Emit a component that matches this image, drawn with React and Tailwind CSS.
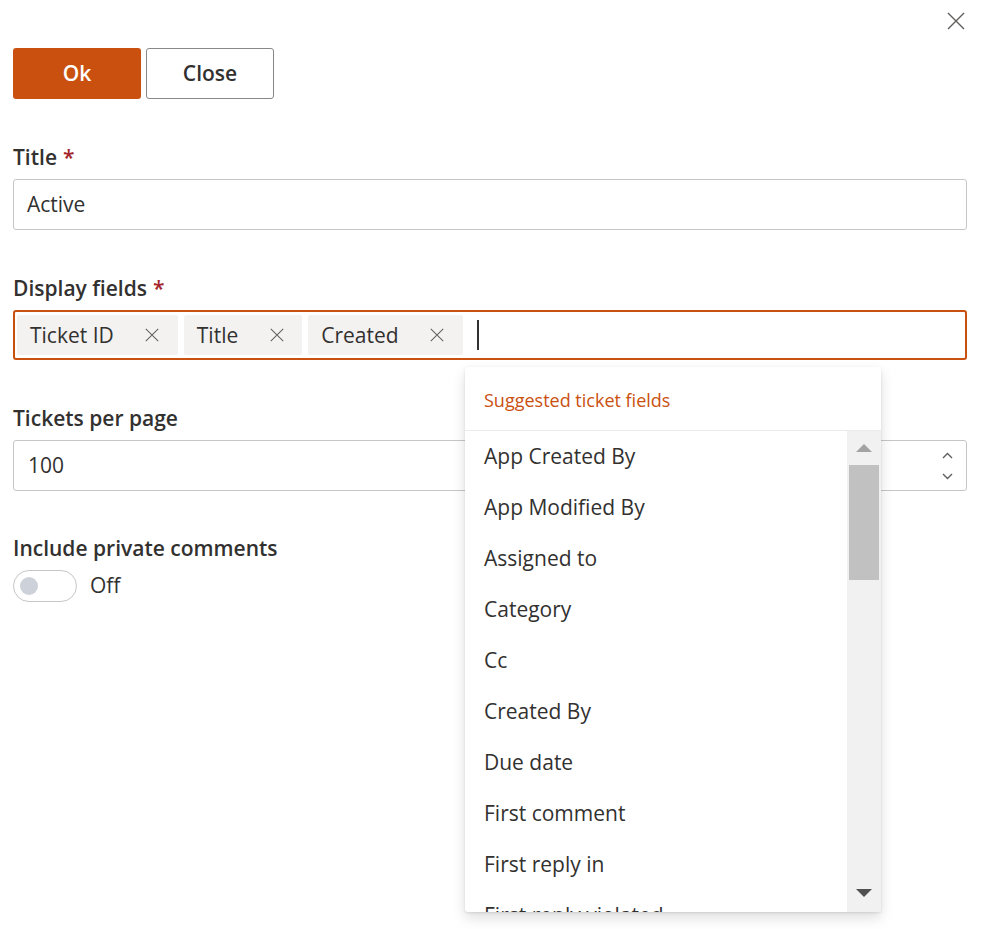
import React from "react";

function XIcon({ size = 18, color = "#605e5c", stroke = 1.3 }) {
  return (
    <svg width={size} height={size} viewBox="0 0 18 18" fill="none">
      <path d="M1 1L17 17M17 1L1 17" stroke={color} strokeWidth={stroke} />
    </svg>
  );
}

function Label({ children, required }) {
  return (
    <div className="h-[29px] leading-[29px] text-[21px] font-semibold text-[#323130] mb-[7px]">
      {children}
      {required && <span className="text-[#a4262c] ml-[6px]">*</span>}
    </div>
  );
}

function Tag({ text }) {
  return (
    <div className="h-[40px] flex items-center bg-[#f3f2f1] rounded-[2px]">
      <span className="px-[13px] text-[21px] text-[#323130] leading-none">{text}</span>
      <span className="w-[51px] h-full flex items-center justify-center">
        <XIcon size={14} color="#605e5c" stroke={1.3} />
      </span>
    </div>
  );
}

const items = [
  "App Created By",
  "App Modified By",
  "Assigned to",
  "Category",
  "Cc",
  "Created By",
  "Due date",
  "First comment",
  "First reply in",
  "First reply violated",
];

export default function App() {
  return (
    <div className="relative w-[995px] h-[929px] bg-white text-[#323130] font-['Open_Sans',sans-serif] overflow-hidden">
      <div className="h-[48px] flex justify-end pr-[19px]">
        <div className="w-[40px] h-[40px] mt-[1px] flex items-center justify-center">
          <XIcon size={18} color="#605e5c" stroke={1.4} />
        </div>
      </div>

      <div className="pl-[13px] w-[967px]">
        <div className="flex gap-[5px]">
          <button className="w-[128px] h-[51px] rounded-[3px] bg-[#ca5010] text-white text-[21px] font-semibold flex items-center justify-center">
            Ok
          </button>
          <button className="w-[128px] h-[51px] rounded-[3px] bg-white border border-[#8a8886] text-[#323130] text-[21px] font-semibold flex items-center justify-center">
            Close
          </button>
        </div>

        <div className="mt-[44px]">
          <Label required>Title</Label>
          <div className="h-[51px] border border-[#c8c6c4] rounded-[3px] flex items-center px-[13px] text-[21px]">
            Active
          </div>
        </div>

        <div className="mt-[44px]">
          <Label required>Display fields</Label>
          <div className="h-[50px] border-2 border-[#ca5010] rounded-[3px] flex items-center px-[2px] gap-[6px]">
            <Tag text="Ticket ID" />
            <Tag text="Title" />
            <Tag text="Created" />
            <div className="ml-[8px] w-[2px] h-[30px] bg-[#323130]" />
          </div>
        </div>

        <div className="mt-[44px]">
          <Label>Tickets per page</Label>
          <div className="h-[51px] border border-[#c8c6c4] rounded-[3px] flex items-center pl-[14px] text-[21px]">
            <span className="flex-1">100</span>
            <div className="w-[34px] h-full flex flex-col items-center justify-center gap-[14px] pr-[4px]">
              <svg width="11" height="7" viewBox="0 0 11 7" fill="none">
                <path d="M1 6L5.5 1.5L10 6" stroke="#605e5c" strokeWidth="1.4" />
              </svg>
              <svg width="11" height="7" viewBox="0 0 11 7" fill="none">
                <path d="M1 1L5.5 5.5L10 1" stroke="#605e5c" strokeWidth="1.4" />
              </svg>
            </div>
          </div>
        </div>

        <div className="mt-[43px]">
          <Label>Include private comments</Label>
          <div className="flex items-center gap-[13px]">
            <div className="w-[64px] h-[32px] rounded-full border border-[#c8c6c4] flex items-center pl-[6px]">
              <div className="w-[18px] h-[18px] rounded-full bg-[#cdd1d9]" />
            </div>
            <span className="text-[21px]">Off</span>
          </div>
        </div>
      </div>

      <div className="absolute left-[465px] top-[367px] w-[416px] h-[545px] bg-white rounded-[3px] shadow-[0_6px_14px_rgba(0,0,0,0.13),0_1px_3px_rgba(0,0,0,0.11)] flex flex-col overflow-hidden">
        <div className="h-[64px] flex items-center pl-[19px] pt-[3px] border-b border-[#edebe9] text-[18px] text-[#ca5010]">
          Suggested ticket fields
        </div>
        <div className="flex-1 flex overflow-hidden">
          <div className="flex-1 overflow-hidden">
            {items.map((t) => (
              <div key={t} className="h-[51px] flex items-center pl-[19px] text-[21px] text-[#323130] whitespace-nowrap">
                {t}
              </div>
            ))}
          </div>
          <div className="w-[34px] bg-[#f1f1f1] flex flex-col items-center relative">
            <div className="h-[34px] w-full flex items-center justify-center">
              <svg width="16" height="8" viewBox="0 0 16 8">
                <path d="M0 8L8 0L16 8Z" fill="#a3a3a3" />
              </svg>
            </div>
            <div className="w-[30px] h-[115px] bg-[#c1c1c1]" />
            <div className="flex-1" />
            <div className="h-[38px] w-full flex items-center justify-center">
              <svg width="16" height="8" viewBox="0 0 16 8">
                <path d="M0 0L16 0L8 8Z" fill="#505050" />
              </svg>
            </div>
          </div>
        </div>
      </div>
    </div>
  );
}
